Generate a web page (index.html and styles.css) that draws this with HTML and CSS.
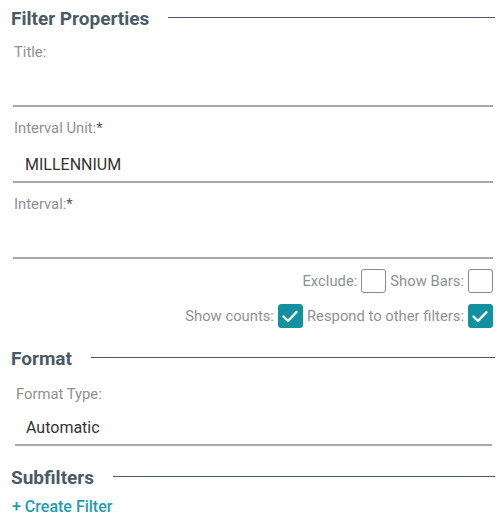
FILE: index.html
```html
<!DOCTYPE html>
<html>
<head>
<meta charset="utf-8">
<link rel="stylesheet" href="styles.css">
</head>
<body>
<div class="panel">
  <div class="section-head"><span class="section-title">Filter Properties</span><span class="rule"></span></div>
  <div class="field">
    <div class="label">Title:</div>
    <div class="input"></div>
  </div>
  <div class="field">
    <div class="label">Interval Unit:<span class="req">*</span></div>
    <div class="input"><span class="value">MILLENNIUM</span></div>
  </div>
  <div class="field">
    <div class="label">Interval:<span class="req">*</span></div>
    <div class="input"></div>
  </div>
  <div class="checks">
    <div class="check-row">
      <span class="check-label">Exclude:</span><span class="box"></span>
      <span class="check-label">Show Bars:</span><span class="box"></span>
    </div>
    <div class="check-row">
      <span class="check-label">Show counts:</span><span class="box on"><svg viewBox="0 0 24 24" width="24" height="24"><path d="M5.5 12.5 L10 17 L18.5 8" fill="none" stroke="#fff" stroke-width="2.4" stroke-linecap="round" stroke-linejoin="round"/></svg></span>
      <span class="check-label">Respond to other filters:</span><span class="box on"><svg viewBox="0 0 24 24" width="24" height="24"><path d="M5.5 12.5 L10 17 L18.5 8" fill="none" stroke="#fff" stroke-width="2.4" stroke-linecap="round" stroke-linejoin="round"/></svg></span>
    </div>
  </div>
  <div class="section-head format"><span class="section-title">Format</span><span class="rule"></span></div>
  <div class="field format-field">
    <div class="label">Format Type:</div>
    <div class="input"><span class="value">Automatic</span></div>
  </div>
  <div class="section-head sub"><span class="section-title">Subfilters</span><span class="rule"></span></div>
  <a class="create">+ Create Filter</a>
</div>
</body>
</html>
```
FILE: styles.css
```css
html, body {
  margin: 0;
  padding: 0;
  background: #fff;
}
body {
  font-family: Roboto, "Liberation Sans", sans-serif;
}
.panel {
  width: 503px;
  padding: 6px 8px 0 11px;
  box-sizing: border-box;
}
.section-head {
  display: flex;
  align-items: center;
  height: 24px;
}
.section-title {
  font-size: 19px;
  font-weight: 700;
  color: #4b5a67;
  padding-right: 19px;
}
.rule {
  flex: 1;
  border-top: 1px solid #4b5a67;
  margin-top: -1px;
}
.field {
  padding-left: 2px;
  padding-right: 2px;
}
.label {
  font-size: 14.8px;
  color: #919191;
  height: 20px;
  line-height: 20px;
  padding-left: 1px;
  margin-top: 11px;
}
.section-head + .field .label {
  margin-top: 12px;
}
.req {
  color: #4b5a67;
}
.input {
  height: 36px;
  border-bottom: 2px solid #a8a8a8;
  display: flex;
  align-items: center;
  padding-left: 12px;
  box-sizing: border-box;
  margin-top: 9px;
}
.value {
  font-size: 16px;
  color: #333;
}
.checks {
  display: flex;
  flex-direction: column;
  align-items: flex-end;
  gap: 11px;
  padding-right: 2px;
  margin-top: 10px;
}
.check-row {
  display: flex;
  align-items: center;
  gap: 4px;
}
.check-label {
  font-size: 14.8px;
  color: #919191;
}
.box {
  width: 25px;
  height: 24px;
  box-sizing: border-box;
  border: 1px solid #8a8a8a;
  border-radius: 3px;
  display: inline-flex;
}
.box.on {
  background: #12929f;
  border-color: #12929f;
}
.box svg {
  margin: -1px;
}
.format {
  margin-top: 18px;
}
.format-field {
  padding-left: 4px;
  padding-right: 3px;
}
.section-head + .format-field .label {
  margin-top: 14px;
}
.format-field .input {
  padding-left: 11px;
  margin-top: 6px;
}
.sub {
  margin-top: 19px;
}
.create {
  display: block;
  margin-top: 9px;
  margin-left: 1px;
  font-size: 16px;
  line-height: 18px;
  font-weight: 500;
  color: #1c9db3;
  cursor: pointer;
}
```
